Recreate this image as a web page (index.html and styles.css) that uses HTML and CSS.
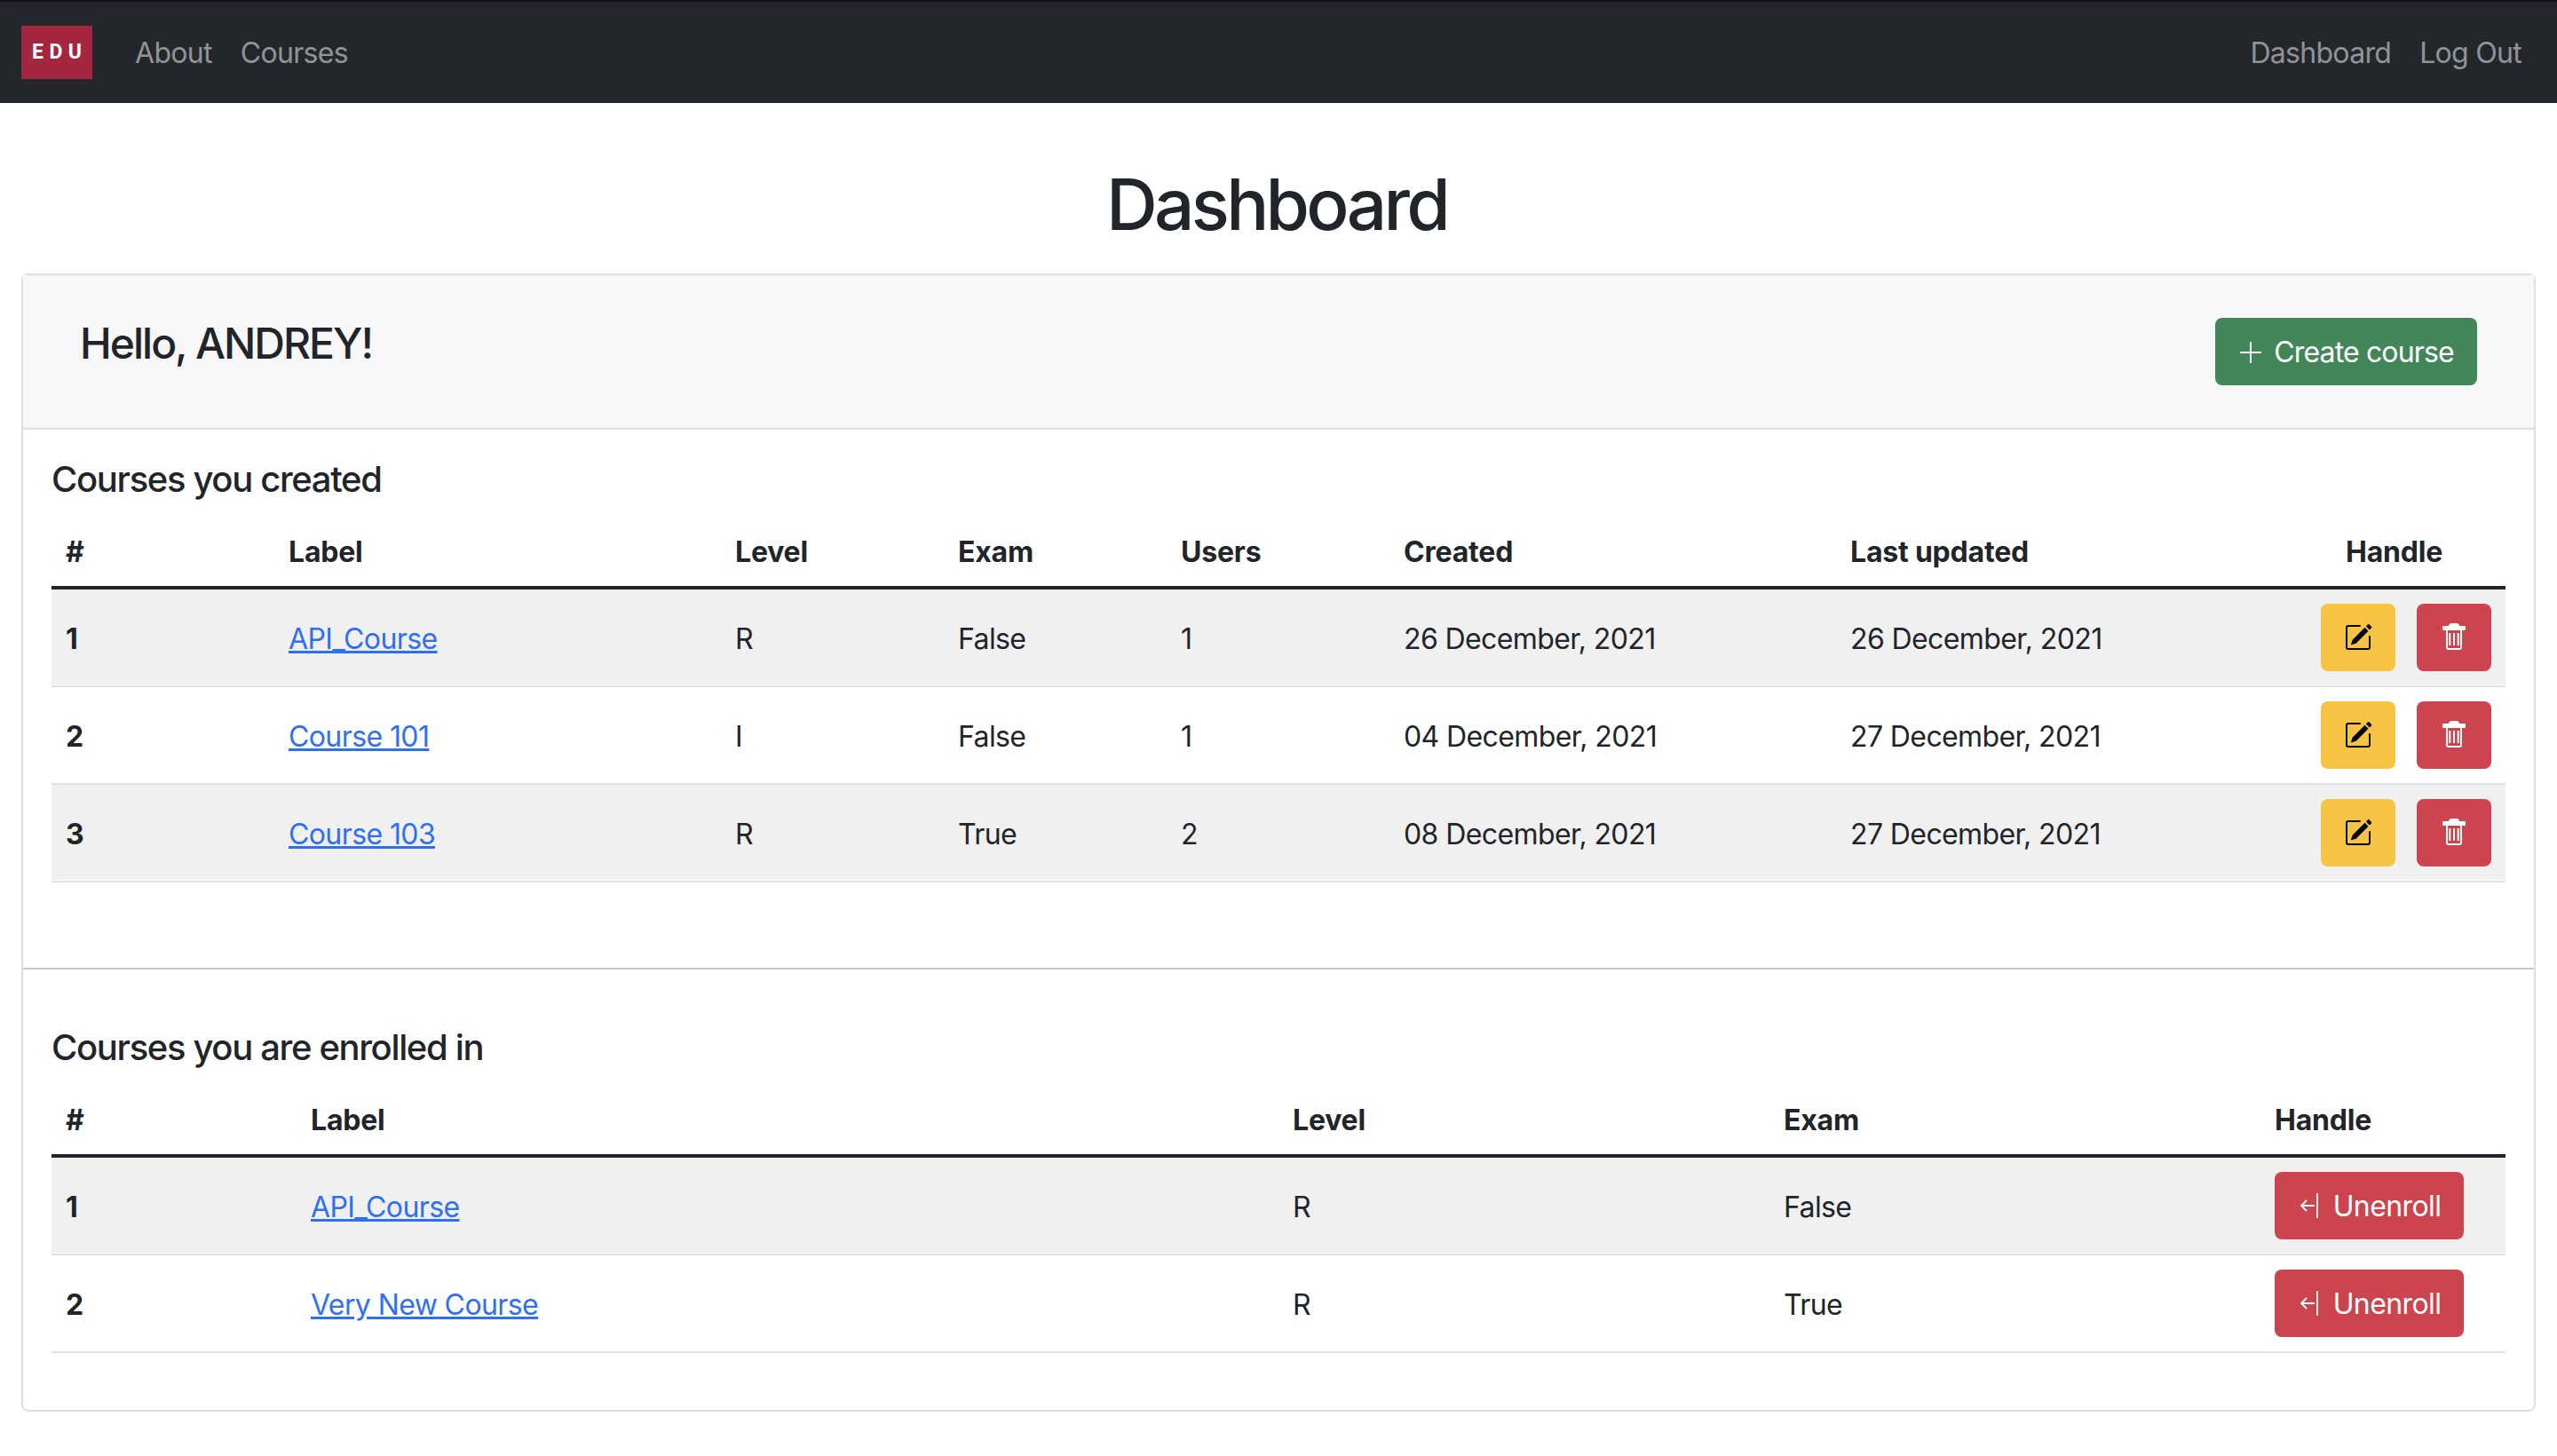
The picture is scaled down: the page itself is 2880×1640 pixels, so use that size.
FILE: index.html
```html
<!DOCTYPE html>
<html lang="en">
<head>
    <meta charset="UTF-8">
    <title>Dashboard</title>
    <link rel="stylesheet" href="styles.css">
</head>
<body>
    <svg class="sprites" width="0" height="0">
        <symbol id="pencil" viewBox="0 0 16 16">
            <path d="M15.502 1.94a.5.5 0 0 1 0 .706L14.459 3.69l-2-2L13.502.646a.5.5 0 0 1 .707 0l1.293 1.293zm-1.75 2.456-2-2L4.939 9.21a.5.5 0 0 0-.121.196l-.805 2.414a.25.25 0 0 0 .316.316l2.414-.805a.5.5 0 0 0 .196-.12l6.813-6.814z"/>
            <path d="M1 13.5A1.5 1.5 0 0 0 2.5 15h11a1.5 1.5 0 0 0 1.5-1.5v-6a.5.5 0 0 0-1 0v6a.5.5 0 0 1-.5.5h-11a.5.5 0 0 1-.5-.5v-11a.5.5 0 0 1 .5-.5H9a.5.5 0 0 0 0-1H2.500A1.500 1.500 0 0 0 1 2.500v11z"/>
        </symbol>
        <symbol id="trash" viewBox="0 0 32 32">
            <path d="M10 3c0-2 2-3 3-3h6c1 0 3 1 3 3h6a1 1 0 0 1 1 1v3a1 1 0 0 1-1 1H4a1 1 0 0 1-1-1V4a1 1 0 0 1 1-1z" fill="#fff"/>
            <path d="M8 8v19a2 2 0 0 0 2 2h12a2 2 0 0 0 2-2V8M11.300 11v14M16 11v14M20.700 11v14" fill="none" stroke="#fff" stroke-width="2"/>
        </symbol>
        <symbol id="leave" viewBox="0 0 28 28">
            <path d="M22 0v28M4 14h15M10 8l-6 6 6 6" fill="none" stroke="#fff" stroke-width="1.800"/>
        </symbol>
    </svg>
    <nav class="navbar">
        <div class="nav-left">
            <a class="brand" href="#">EDU</a>
            <a class="nav-link" href="#">About</a>
            <a class="nav-link" href="#">Courses</a>
        </div>
        <div class="nav-right">
            <a class="nav-link" href="#">Dashboard</a>
            <a class="nav-link" href="#">Log Out</a>
        </div>
    </nav>
    <h1 class="title">Dashboard</h1>
    <div class="card">
        <div class="card-header">
            <h2 class="hello">Hello, ANDREY!</h2>
            <a class="btn btn-green" href="#">
                <svg class="icon-plus" viewBox="0 0 28 28"><path d="M14 2v24M2 14h24"/></svg>
                Create course
            </a>
        </div>
        <section class="block block-created">
            <h3 class="block-title">Courses you created</h3>
            <table class="table created">
                <thead>
                    <tr><th>#</th><th>Label</th><th>Level</th><th>Exam</th><th>Users</th><th>Created</th><th>Last updated</th><th class="center">Handle</th></tr>
                </thead>
                <tbody>
                    <tr class="odd">
                        <th>1</th><td><a href="#">API_Course</a></td><td>R</td><td>False</td><td>1</td><td>26 December, 2021</td><td>26 December, 2021</td>
                        <td class="actions"><div class="action-row">
                            <a class="btn btn-yellow" href="#"><svg class="icon"><use href="#pencil"/></svg></a>
                            <a class="btn btn-red" href="#"><svg class="icon"><use href="#trash"/></svg></a>
                        </div></td>
                    </tr>
                    <tr>
                        <th>2</th><td><a href="#">Course 101</a></td><td>I</td><td>False</td><td>1</td><td>04 December, 2021</td><td>27 December, 2021</td>
                        <td class="actions"><div class="action-row">
                            <a class="btn btn-yellow" href="#"><svg class="icon"><use href="#pencil"/></svg></a>
                            <a class="btn btn-red" href="#"><svg class="icon"><use href="#trash"/></svg></a>
                        </div></td>
                    </tr>
                    <tr class="odd">
                        <th>3</th><td><a href="#">Course 103</a></td><td>R</td><td>True</td><td>2</td><td>08 December, 2021</td><td>27 December, 2021</td>
                        <td class="actions"><div class="action-row">
                            <a class="btn btn-yellow" href="#"><svg class="icon"><use href="#pencil"/></svg></a>
                            <a class="btn btn-red" href="#"><svg class="icon"><use href="#trash"/></svg></a>
                        </div></td>
                    </tr>
                </tbody>
            </table>
        </section>
        <section class="block block-enrolled">
            <h3 class="block-title">Courses you are enrolled in</h3>
            <table class="table enrolled">
                <thead>
                    <tr><th>#</th><th>Label</th><th>Level</th><th>Exam</th><th>Handle</th></tr>
                </thead>
                <tbody>
                    <tr class="odd">
                        <th>1</th><td><a href="#">API_Course</a></td><td>R</td><td>False</td>
                        <td class="actions"><a class="btn btn-red btn-text" href="#"><svg class="icon-leave"><use href="#leave"/></svg><span class="btn-label">Unenroll</span></a></td>
                    </tr>
                    <tr>
                        <th>2</th><td><a href="#">Very New Course</a></td><td>R</td><td>True</td>
                        <td class="actions"><a class="btn btn-red btn-text" href="#"><svg class="icon-leave"><use href="#leave"/></svg><span class="btn-label">Unenroll</span></a></td>
                    </tr>
                </tbody>
            </table>
        </section>
    </div>
</body>
</html>
```

FILE: styles.css
```css
* {
    box-sizing: border-box;
}
body {
    margin: 0;
    background-color: #fff;
    color: #212529;
    font-family: Inter, "Liberation Sans", sans-serif;
    font-size: 32px;
    line-height: 1.5;
    letter-spacing: -0.7px;
}
.sprites {
    display: block;
    height: 0;
}
.navbar {
    display: flex;
    justify-content: space-between;
    align-items: center;
    height: 116px;
    padding: 0 40px 0 24px;
    background-color: #23272c;
    border-top: 2px solid #111;
}
.nav-left, .nav-right {
    display: flex;
    align-items: center;
    gap: 32px;
}
.nav-link {
    padding-top: 2px;
    color: rgba(255, 255, 255, .5);
    text-decoration: none;
}
.brand {
    display: block;
    width: 80px;
    height: 60px;
    margin-right: 16px;
    background-color: #a5263f;
    color: #fff;
    font-family: "Liberation Sans Narrow", Roboto, sans-serif;
    font-size: 23px;
    font-weight: bold;
    line-height: 60px;
    letter-spacing: 6.500px;
    text-align: center;
    text-indent: 6.500px;
    text-decoration: none;
}
.title {
    margin: 0;
    padding: 66px 4px 0 0;
    height: 192px;
    font-size: 80px;
    font-weight: 550;
    line-height: 1.2;
    letter-spacing: -3.700px;
    text-align: center;
}
.card {
    margin: 0 24px;
    border: 2px solid #dfdfdf;
    border-radius: 8px;
}
.card-header {
    display: flex;
    justify-content: space-between;
    align-items: flex-start;
    height: 174px;
    padding: 48px 64px 0;
    background-color: #f7f7f7;
    border-bottom: 2px solid #dfdfdf;
}
.hello {
    margin: 0;
    font-size: 48px;
    font-weight: 500;
    line-height: 1.2;
    letter-spacing: -2px;
}
.btn {
    display: inline-flex;
    align-items: center;
    justify-content: center;
    border-radius: 8px;
    color: #fff;
    text-decoration: none;
}
.btn-green {
    gap: 12px;
    width: 295px;
    height: 76px;
    padding-top: 1px;
    background-color: #42865a;
    letter-spacing: -0.85px;
}
.btn-yellow {
    width: 84px;
    height: 76px;
    background-color: #f7c343;
}
.btn-red {
    width: 84px;
    height: 76px;
    background-color: #cc444d;
}
.btn-text {
    gap: 12px;
    width: 213px;
}
.btn-label {
    padding-top: 2px;
}
.icon-plus {
    width: 28px;
    height: 28px;
    fill: none;
    stroke: #fff;
    stroke-width: 1.800;
}
.icon-leave {
    width: 28px;
    height: 28px;
}
.icon {
    width: 32px;
    height: 32px;
    fill: #000;
}
.block {
    padding: 0 32px;
}
.block-created {
    height: 608px;
    padding-top: 32px;
    border-bottom: 2px solid #c8c8c8;
}
.block-enrolled {
    height: 496px;
    padding-top: 64px;
}
.block-title {
    margin: 0 0 16px;
    font-size: 40px;
    font-weight: 500;
    line-height: 1.2;
    letter-spacing: -1.350px;
}
.table {
    width: 100%;
    border-collapse: separate;
    border-spacing: 0;
    table-layout: fixed;
}
.table th, .table td {
    height: 110px;
    padding: 18px 16px 14px;
    text-align: left;
    font-weight: 400;
    letter-spacing: -0.6px;
    border-bottom: 2px solid #dee2e6;
}
.table th {
    font-weight: 700;
    letter-spacing: -0.2px;
}
.table thead th {
    height: 84px;
    border-bottom: 4px solid #212529;
}
.table .center {
    text-align: center;
}
.odd th, .odd td {
    background-color: #f0f0f1;
    box-shadow: inset 0 -1px 0 #fff;
}
.table a:not(.btn) {
    color: #2f6ff5;
}
.table td.actions {
    padding: 0 16px;
}
.action-row {
    display: flex;
    justify-content: flex-end;
    gap: 24px;
}
.created th:nth-child(1) { width: 251px; }
.created th:nth-child(2) { width: 503px; }
.created th:nth-child(3) { width: 251px; }
.created th:nth-child(4) { width: 251px; }
.created th:nth-child(5) { width: 251px; }
.created th:nth-child(6) { width: 503px; }
.created th:nth-child(7) { width: 503px; }
.enrolled th:nth-child(1) { width: 276px; }
.enrolled th:nth-child(2) { width: 1106px; }
.enrolled th:nth-child(3) { width: 553px; }
.enrolled th:nth-child(4) { width: 553px; }
```
